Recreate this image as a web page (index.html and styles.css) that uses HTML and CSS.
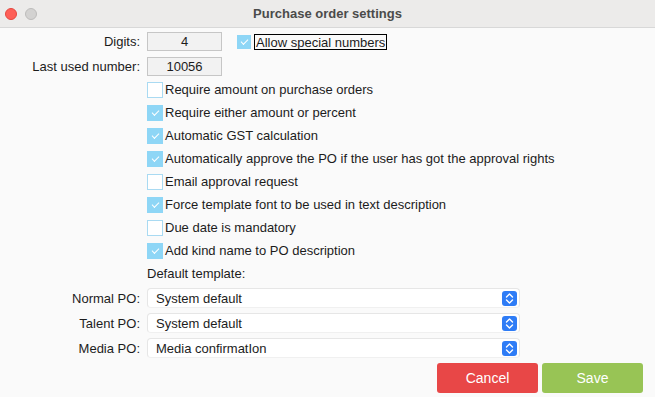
FILE: index.html
```html
<!DOCTYPE html>
<html lang="en">

<head>
    <meta charset="UTF-8">
    <meta name="viewport" content="width=device-width, initial-scale=1.0">
    <title>Purchase order settings</title>
    <link rel="stylesheet" href="styles.css">
</head>

<body>
    <div class="titlebar">
        <div class="lights">
            <span class="light close"></span>
            <span class="light idle"></span>
        </div>
        <div class="title">Purchase order settings</div>
        <div></div>
    </div>

    <div class="content">
        <div class="row field-row">
            <span class="label">Digits:</span>
            <div class="num-box">4</div>
            <span class="check small checked"></span>
            <span class="focus-text">Allow special numbers</span>
        </div>
        <div class="row field-row second">
            <span class="label">Last used number:</span>
            <div class="num-box">10056</div>
        </div>

        <div class="check-list">
            <div class="row check-row"><span class="label"></span><span class="check"></span><span class="check-text">Require amount on purchase orders</span></div>
            <div class="row check-row"><span class="label"></span><span class="check checked"></span><span class="check-text">Require either amount or percent</span></div>
            <div class="row check-row"><span class="label"></span><span class="check checked"></span><span class="check-text">Automatic GST calculation</span></div>
            <div class="row check-row"><span class="label"></span><span class="check checked"></span><span class="check-text">Automatically approve the PO if the user has got the approval rights</span></div>
            <div class="row check-row"><span class="label"></span><span class="check"></span><span class="check-text">Email approval request</span></div>
            <div class="row check-row"><span class="label"></span><span class="check checked"></span><span class="check-text">Force template font to be used in text description</span></div>
            <div class="row check-row"><span class="label"></span><span class="check"></span><span class="check-text">Due date is mandatory</span></div>
            <div class="row check-row"><span class="label"></span><span class="check checked"></span><span class="check-text">Add kind name to PO description</span></div>
            <div class="row check-row"><span class="label"></span><span>Default template:</span></div>
        </div>

        <div class="row select-row">
            <span class="label">Normal PO:</span>
            <div class="select">
                <span>System default</span>
                <span class="stepper"><svg width="9" height="13" viewBox="0 0 9 13"><path d="M1.5 5 L4.5 2 L7.5 5 M1.5 8 L4.5 11 L7.5 8" fill="none" stroke="#fff" stroke-width="1.4" stroke-linecap="round" stroke-linejoin="round"/></svg></span>
            </div>
        </div>
        <div class="row select-row">
            <span class="label">Talent PO:</span>
            <div class="select">
                <span>System default</span>
                <span class="stepper"><svg width="9" height="13" viewBox="0 0 9 13"><path d="M1.5 5 L4.5 2 L7.5 5 M1.5 8 L4.5 11 L7.5 8" fill="none" stroke="#fff" stroke-width="1.4" stroke-linecap="round" stroke-linejoin="round"/></svg></span>
            </div>
        </div>
        <div class="row select-row">
            <span class="label">Media PO:</span>
            <div class="select">
                <span>Media confirmatIon</span>
                <span class="stepper"><svg width="9" height="13" viewBox="0 0 9 13"><path d="M1.5 5 L4.5 2 L7.5 5 M1.5 8 L4.5 11 L7.5 8" fill="none" stroke="#fff" stroke-width="1.4" stroke-linecap="round" stroke-linejoin="round"/></svg></span>
            </div>
        </div>

        <div class="buttons">
            <button class="btn cancel">Cancel</button>
            <button class="btn save">Save</button>
        </div>
    </div>
</body>

</html>
```

FILE: styles.css
```css
body {
    margin: 0;
    font-family: "Liberation Sans", Arial, sans-serif;
    font-size: 13px;
    color: #1c1c1c;
    background-color: #fafafa;
}

.titlebar {
    display: grid;
    grid-template-columns: 1fr auto 1fr;
    align-items: center;
    height: 27px;
    background-color: #ecebea;
    border-bottom: 1px solid #d8d8d8;
}

.lights {
    display: flex;
    gap: 8px;
    padding-left: 5px;
    padding-top: 1px;
}

.light {
    width: 12px;
    height: 12px;
    border-radius: 50%;
    box-sizing: border-box;
}

.light.close {
    background-color: #fe5f57;
    border: 1px solid #e5473f;
}

.light.idle {
    background-color: #d3d2d1;
    border: 1px solid #bdbcbb;
}

.title {
    font-weight: bold;
    color: #4b4b4b;
}

.content {
    padding: 4px 12px 0 0;
}

.row {
    display: flex;
    align-items: center;
}

.label {
    flex: 0 0 140px;
    margin-right: 7px;
    text-align: right;
}

.field-row {
    height: 19px;
}

.field-row.second {
    margin-top: 6px;
}

.num-box {
    width: 75px;
    height: 19px;
    box-sizing: border-box;
    border: 1px solid #c6c6c6;
    background-color: #f2f2f2;
    text-align: center;
    line-height: 17px;
}

.check {
    width: 16px;
    height: 16px;
    box-sizing: border-box;
    border: 1px solid #a9daf2;
    background-color: #fff;
    display: flex;
    align-items: center;
    justify-content: center;
    flex-shrink: 0;
}

.check.checked {
    background-color: #8ed6f6;
    border-color: #8ed6f6;
}

.check.checked::after {
    content: "";
    width: 6px;
    height: 3px;
    border-left: 1.5px solid #fff;
    border-bottom: 1.5px solid #fff;
    transform: rotate(-45deg);
    margin-top: -2px;
}

.check.small {
    width: 14px;
    height: 14px;
    margin-left: 15px;
}

.focus-text {
    margin-left: 3px;
    border: 1px solid #000;
    height: 16px;
    line-height: 15px;
    padding: 0 1px;
    box-sizing: border-box;
}

.check-list {
    margin-top: 2px;
}

.check-row {
    height: 23px;
}

.check-text {
    margin-left: 2px;
}

.select-row {
    height: 20px;
    margin-top: 5px;
}

.check-list + .select-row {
    margin-top: 3px;
}

.select {
    width: 373px;
    height: 20px;
    box-sizing: border-box;
    display: flex;
    align-items: center;
    justify-content: space-between;
    padding: 0 2px 0 8px;
    background-color: #fff;
    border: 1px solid #e6e6e6;
    border-bottom-color: #f0f0f0;
    border-radius: 4px;
}

.stepper {
    width: 15px;
    height: 15px;
    border-radius: 3px;
    background-color: #2e7cf6;
    display: flex;
    align-items: center;
    justify-content: center;
}

.buttons {
    display: flex;
    justify-content: flex-end;
    gap: 4px;
    margin-top: 5px;
}

.btn {
    width: 101px;
    height: 30px;
    border: none;
    border-radius: 3px;
    color: #fff;
    font-family: "Liberation Sans", Arial, sans-serif;
    font-size: 14px;
    cursor: pointer;
}

.cancel {
    background-color: #e84747;
}

.save {
    background-color: #98c455;
}
```
